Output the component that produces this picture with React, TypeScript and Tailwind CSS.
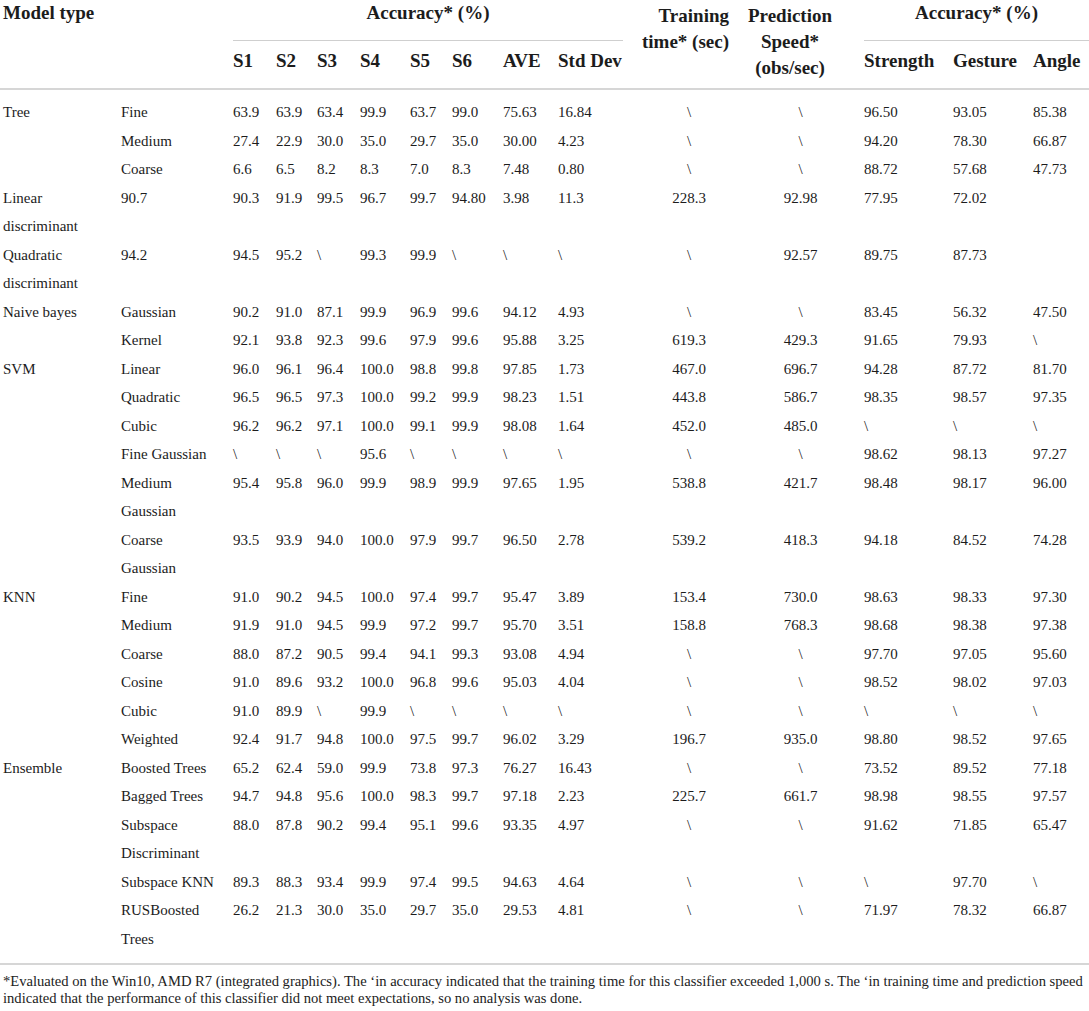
import React from "react";

const COLS =
    "grid grid-cols-[118px_112px_43px_41px_43px_50px_42px_51px_55px_65px_132px_109px_89px_80px_56px]";

type Row = [string, string, ...string[]];

const rows: Row[] = [
    ["Tree", "Fine", "63.9", "63.9", "63.4", "99.9", "63.7", "99.0", "75.63", "16.84", "\\", "\\", "96.50", "93.05", "85.38"],
    ["", "Medium", "27.4", "22.9", "30.0", "35.0", "29.7", "35.0", "30.00", "4.23", "\\", "\\", "94.20", "78.30", "66.87"],
    ["", "Coarse", "6.6", "6.5", "8.2", "8.3", "7.0", "8.3", "7.48", "0.80", "\\", "\\", "88.72", "57.68", "47.73"],
    ["Linear\ndiscriminant", "90.7", "90.3", "91.9", "99.5", "96.7", "99.7", "94.80", "3.98", "11.3", "228.3", "92.98", "77.95", "72.02", ""],
    ["Quadratic\ndiscriminant", "94.2", "94.5", "95.2", "\\", "99.3", "99.9", "\\", "\\", "\\", "\\", "92.57", "89.75", "87.73", ""],
    ["Naive bayes", "Gaussian", "90.2", "91.0", "87.1", "99.9", "96.9", "99.6", "94.12", "4.93", "\\", "\\", "83.45", "56.32", "47.50"],
    ["", "Kernel", "92.1", "93.8", "92.3", "99.6", "97.9", "99.6", "95.88", "3.25", "619.3", "429.3", "91.65", "79.93", "\\"],
    ["SVM", "Linear", "96.0", "96.1", "96.4", "100.0", "98.8", "99.8", "97.85", "1.73", "467.0", "696.7", "94.28", "87.72", "81.70"],
    ["", "Quadratic", "96.5", "96.5", "97.3", "100.0", "99.2", "99.9", "98.23", "1.51", "443.8", "586.7", "98.35", "98.57", "97.35"],
    ["", "Cubic", "96.2", "96.2", "97.1", "100.0", "99.1", "99.9", "98.08", "1.64", "452.0", "485.0", "\\", "\\", "\\"],
    ["", "Fine Gaussian", "\\", "\\", "\\", "95.6", "\\", "\\", "\\", "\\", "\\", "\\", "98.62", "98.13", "97.27"],
    ["", "Medium\nGaussian", "95.4", "95.8", "96.0", "99.9", "98.9", "99.9", "97.65", "1.95", "538.8", "421.7", "98.48", "98.17", "96.00"],
    ["", "Coarse\nGaussian", "93.5", "93.9", "94.0", "100.0", "97.9", "99.7", "96.50", "2.78", "539.2", "418.3", "94.18", "84.52", "74.28"],
    ["KNN", "Fine", "91.0", "90.2", "94.5", "100.0", "97.4", "99.7", "95.47", "3.89", "153.4", "730.0", "98.63", "98.33", "97.30"],
    ["", "Medium", "91.9", "91.0", "94.5", "99.9", "97.2", "99.7", "95.70", "3.51", "158.8", "768.3", "98.68", "98.38", "97.38"],
    ["", "Coarse", "88.0", "87.2", "90.5", "99.4", "94.1", "99.3", "93.08", "4.94", "\\", "\\", "97.70", "97.05", "95.60"],
    ["", "Cosine", "91.0", "89.6", "93.2", "100.0", "96.8", "99.6", "95.03", "4.04", "\\", "\\", "98.52", "98.02", "97.03"],
    ["", "Cubic", "91.0", "89.9", "\\", "99.9", "\\", "\\", "\\", "\\", "\\", "\\", "\\", "\\", "\\"],
    ["", "Weighted", "92.4", "91.7", "94.8", "100.0", "97.5", "99.7", "96.02", "3.29", "196.7", "935.0", "98.80", "98.52", "97.65"],
    ["Ensemble", "Boosted Trees", "65.2", "62.4", "59.0", "99.9", "73.8", "97.3", "76.27", "16.43", "\\", "\\", "73.52", "89.52", "77.18"],
    ["", "Bagged Trees", "94.7", "94.8", "95.6", "100.0", "98.3", "99.7", "97.18", "2.23", "225.7", "661.7", "98.98", "98.55", "97.57"],
    ["", "Subspace\nDiscriminant", "88.0", "87.8", "90.2", "99.4", "95.1", "99.6", "93.35", "4.97", "\\", "\\", "91.62", "71.85", "65.47"],
    ["", "Subspace KNN", "89.3", "88.3", "93.4", "99.9", "97.4", "99.5", "94.63", "4.64", "\\", "\\", "\\", "97.70", "\\"],
    ["", "RUSBoosted\nTrees", "26.2", "21.3", "30.0", "35.0", "29.7", "35.0", "29.53", "4.81", "\\", "\\", "71.97", "78.32", "66.87"],
];

function cellClass(i: number) {
    if (i === 10) return "whitespace-pre text-center";
    if (i === 11) return "whitespace-pre text-center pr-[18px]";
    return "whitespace-pre";
}

function HeaderRow() {
    const sub = ["S1", "S2", "S3", "S4", "S5", "S6", "AVE", "Std Dev"];
    const right = ["Strength", "Gesture", "Angle"];
    return (
        <div className={`${COLS} grid-rows-[41px_47px] border-b-2 border-[#d6d6d6] pl-[3px] font-bold text-[19px] leading-[26px]`}>
            <div className="col-start-1 col-span-2 row-start-1 whitespace-nowrap">Model type</div>
            <div className="col-start-3 col-span-8 row-start-1 text-center border-b border-[#cfcfcf]">Accuracy* (%)</div>
            <div className="col-start-11 row-start-1 row-span-2 text-right pr-[26px] pt-[3px] whitespace-nowrap">
                Training<br/>time* (sec)
            </div>
            <div className="col-start-12 row-start-1 row-span-2 flex flex-col items-center pr-[39px] pt-[3px] whitespace-nowrap">
                <span>Prediction</span>
                <span>Speed*</span>
                <span>(obs/sec)</span>
            </div>
            <div className="col-start-13 col-span-3 row-start-1 text-center border-b border-[#cfcfcf]">Accuracy* (%)</div>
            {sub.map((s, i) => (
                <div key={s} className="row-start-2 pt-[7px] whitespace-nowrap" style={{gridColumnStart: i + 3}}>{s}</div>
            ))}
            {right.map((s, i) => (
                <div key={s} className="row-start-2 pt-[7px] whitespace-nowrap" style={{gridColumnStart: i + 13}}>{s}</div>
            ))}
        </div>
    );
}

export default function App() {
    return (
        <div className="w-[1089px] h-[1011px] overflow-hidden bg-white text-[#1c1c1c] font-[Liberation_Serif,Times_New_Roman,serif]">
            <HeaderRow/>
            <div className={`${COLS} pl-[3px] pt-[8px] pb-[10px] text-[15px] leading-[28.5px] border-b-2 border-[#d6d6d6]`}>
                {rows.map((row, r) =>
                    row.map((cell, i) => (
                        <div key={`${r}-${i}`} className={cellClass(i)}>{cell}</div>
                    ))
                )}
            </div>
            <p className="pt-[8px] pl-[3px] text-[14.6px] leading-[17px] text-[#222]">
                <span className="whitespace-nowrap">*Evaluated on the Win10, AMD R7 (integrated graphics). The ‘in accuracy indicated that the training time for this classifier exceeded 1,000 s. The ‘in training time and prediction speed</span>
                <br/>
                indicated that the performance of this classifier did not meet expectations, so no analysis was done.
            </p>
        </div>
    );
}
